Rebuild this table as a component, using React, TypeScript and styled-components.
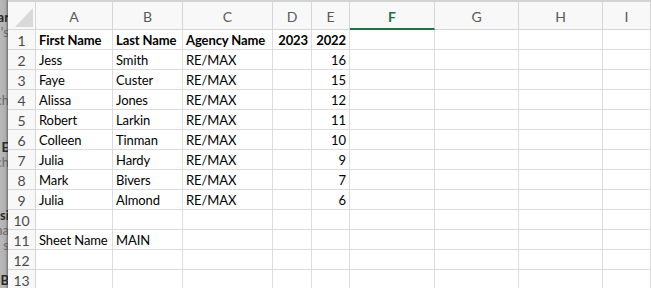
import React from 'react';
import styled, { createGlobalStyle } from 'styled-components';

const GlobalStyle = createGlobalStyle`
  html, body {
    margin: 0;
    padding: 0;
    background: #ffffff;
    overflow: hidden;
  }
`;

const COLUMNS = ['A', 'B', 'C', 'D', 'E', 'F', 'G', 'H', 'I'];
const WIDTHS = [28, 77, 70, 90, 39, 38, 85, 84, 84];
const ACTIVE_COLUMN = 'F';

type Row = {
  first?: string;
  last?: string;
  agency?: string;
  y2023?: string;
  y2022?: string;
  bold?: boolean;
};

const ROWS: Row[] = [
  { first: 'First Name', last: 'Last Name', agency: 'Agency Name', y2023: '2023', y2022: '2022', bold: true },
  { first: 'Jess', last: 'Smith', agency: 'RE/MAX', y2022: '16' },
  { first: 'Faye', last: 'Custer', agency: 'RE/MAX', y2022: '15' },
  { first: 'Alissa', last: 'Jones', agency: 'RE/MAX', y2022: '12' },
  { first: 'Robert', last: 'Larkin', agency: 'RE/MAX', y2022: '11' },
  { first: 'Colleen', last: 'Tinman', agency: 'RE/MAX', y2022: '10' },
  { first: 'Julia', last: 'Hardy', agency: 'RE/MAX', y2022: '9' },
  { first: 'Mark', last: 'Bivers', agency: 'RE/MAX', y2022: '7' },
  { first: 'Julia', last: 'Almond', agency: 'RE/MAX', y2022: '6' },
  {},
  { first: 'Sheet Name', last: 'MAIN' },
  {},
  {},
];

// bits of the window sitting behind the workbook
const PEEK = [
  { text: 'ar', gap: 10, bold: true },
  { text: "'s", gap: 0 },
  { text: 'ch', gap: 53 },
  { text: 'E', gap: 32, bold: true },
  { text: 'ch', gap: 0 },
  { text: 'si', gap: 38, bold: true },
  { text: 'na', gap: 0 },
  { text: 's', gap: 0 },
  { text: 'B', gap: 20, bold: true },
];

const Screen = styled.div`
  display: flex;
  width: 651px;
  height: 288px;
  overflow: hidden;
  font-family: Lato, 'Liberation Sans', sans-serif;
`;

const BackWindow = styled.div`
  width: 8px;
  flex: none;
  display: flex;
  flex-direction: column;
  align-items: flex-end;
  overflow: hidden;
  background: linear-gradient(to right, #b9b9b9 0%, #b0b0b0 70%, #8f8f8f 100%);
`;

const PeekLine = styled.div<{ $gap: number; $bold?: boolean }>`
  margin-top: ${({ $gap }) => $gap}px;
  height: 15px;
  line-height: 15px;
  font-size: 13px;
  white-space: nowrap;
  font-weight: ${({ $bold }) => ($bold ? 700 : 400)};
  color: ${({ $bold }) => ($bold ? '#2a2a2a' : '#6a6a6a')};
  margin-right: -1px;
`;

const Sheet = styled.div`
  flex: 1;
  border-top: 2px solid #d3d3d3;
  display: grid;
  grid-template-columns: ${WIDTHS.map((w) => `${w}px`).join(' ')} 1fr;
  grid-template-rows: 28px;
  grid-auto-rows: 20px;
  background: #ffffff;
  box-shadow: -1px 0 2px rgba(0, 0, 0, 0.25);
`;

const Corner = styled.div`
  box-sizing: border-box;
  border-right: 1px solid #d6d6d6;
  border-bottom: 1px solid #d6d6d6;
  background: #f8f8f8;
  display: flex;
  align-items: flex-end;
  justify-content: flex-end;
  padding: 0 2px 2px 0;
`;

const ColHeader = styled.div<{ $active?: boolean }>`
  box-sizing: border-box;
  border-right: 1px solid #d6d6d6;
  border-bottom: ${({ $active }) => ($active ? '2px solid #1e7145' : '1px solid #d6d6d6')};
  background: #f8f8f8;
  display: flex;
  align-items: center;
  justify-content: center;
  font-size: 14px;
  color: ${({ $active }) => ($active ? '#1e7145' : '#5a5a5a')};
  font-weight: ${({ $active }) => ($active ? 700 : 400)};
  padding-top: 2px;
`;

const RowHeader = styled.div`
  box-sizing: border-box;
  border-right: 1px solid #d6d6d6;
  border-bottom: 1px solid #d6d6d6;
  background: #f8f8f8;
  display: flex;
  align-items: center;
  justify-content: center;
  font-size: 14px;
  color: #4a4a4a;
  padding-top: 1px;
`;

const Cell = styled.div<{ $bold?: boolean; $right?: boolean }>`
  box-sizing: border-box;
  border-right: 1px solid #dcdcdc;
  border-bottom: 1px solid #dcdcdc;
  display: flex;
  align-items: center;
  justify-content: ${({ $right }) => ($right ? 'flex-end' : 'flex-start')};
  padding: 1px 3px 0;
  font-size: 13px;
  font-weight: ${({ $bold }) => ($bold ? 700 : 400)};
  letter-spacing: -0.1px;
  color: #000000;
  white-space: nowrap;
  overflow: hidden;
`;

const CornerMark = () => (
  <svg width="18" height="19" viewBox="0 0 18 19">
    <polygon points="18,0 18,19 0,19" fill="#d9d9d9" />
  </svg>
);

export default function App() {
  return (
    <>
      <GlobalStyle />
      <Screen>
        <BackWindow>
          {PEEK.map((p, i) => (
            <PeekLine key={i} $gap={p.gap} $bold={p.bold}>
              {p.text}
            </PeekLine>
          ))}
        </BackWindow>
        <Sheet>
          <Corner>
            <CornerMark />
          </Corner>
          {COLUMNS.map((c) => (
            <ColHeader key={c} $active={c === ACTIVE_COLUMN}>
              {c}
            </ColHeader>
          ))}
          {ROWS.map((r, i) => (
            <React.Fragment key={i}>
              <RowHeader>{i + 1}</RowHeader>
              <Cell $bold={r.bold}>{r.first}</Cell>
              <Cell $bold={r.bold}>{r.last}</Cell>
              <Cell $bold={r.bold}>{r.agency}</Cell>
              <Cell $bold={r.bold} $right>{r.y2023}</Cell>
              <Cell $bold={r.bold} $right>{r.y2022}</Cell>
              <Cell />
              <Cell />
              <Cell />
              <Cell />
            </React.Fragment>
          ))}
        </Sheet>
      </Screen>
    </>
  );
}
